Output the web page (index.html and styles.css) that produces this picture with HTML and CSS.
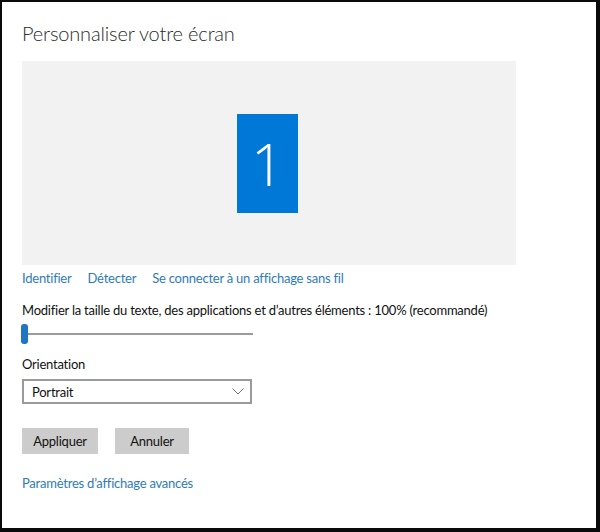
FILE: index.html
```html
<!DOCTYPE html>
<html lang="fr">
<head>
<meta charset="utf-8">
<title>Personnaliser votre écran</title>
<link rel="stylesheet" href="styles.css">
</head>
<body>
<div class="frame">
  <h1 class="title">Personnaliser votre écran</h1>
  <div class="preview">
    <div class="monitor">1</div>
  </div>
  <div class="links">
    <a class="link">Identifier</a>
    <a class="link">Détecter</a>
    <a class="link">Se connecter à un affichage sans fil</a>
  </div>
  <p class="label scale-label">Modifier la taille du texte, des applications et d’autres éléments : 100% (recommandé)</p>
  <div class="slider">
    <div class="track"></div>
    <div class="thumb"></div>
  </div>
  <p class="label orient-label">Orientation</p>
  <div class="select">
    <span class="select-value">Portrait</span>
    <svg class="chevron" width="12" height="7" viewBox="0 0 12 7"><polyline points="0.5,0.5 6,6 11.5,0.5" fill="none" stroke="#777" stroke-width="1"/></svg>
  </div>
  <div class="buttons">
    <button class="btn btn-apply">Appliquer</button>
    <button class="btn btn-cancel">Annuler</button>
  </div>
  <a class="link advanced">Paramètres d’affichage avancés</a>
</div>
</body>
</html>
```
FILE: styles.css
```css
html, body {
  margin: 0;
  padding: 0;
  background: #ffffff;
}
.frame {
  box-sizing: border-box;
  width: 600px;
  height: 532px;
  border-style: solid;
  border-color: #0a0a0a;
  border-width: 2px 4px 4px 2px;
  padding: 17px 0 0 20px;
  font-family: "Lato", "Open Sans", sans-serif;
  font-size: 13px;
  letter-spacing: -0.23px;
  line-height: 20px;
  color: #111;
  display: flex;
  flex-direction: column;
  align-items: flex-start;
}
.title {
  margin: 0;
  font-size: 20px;
  letter-spacing: -0.15px;
  line-height: 28px;
  font-weight: 300;
  color: #2a2a2a;
}
.preview {
  margin-top: 14px;
  width: 494px;
  height: 204px;
  background: #f2f2f2;
  display: flex;
  align-items: center;
  justify-content: center;
}
.monitor {
  width: 61px;
  height: 99px;
  margin-right: 3px;
  background: #0078d7;
  color: #ffffff;
  font-family: "Open Sans", sans-serif;
  font-size: 58px;
  font-weight: 300;
  letter-spacing: 0;
  line-height: 99px;
  text-align: center;
}
.links {
  margin-top: 3px;
  display: flex;
  gap: 16px;
}
.link {
  color: #2f7bb8;
  text-decoration: none;
}
.label {
  margin: 0;
}
.scale-label {
  margin-top: 12px;
}
.slider {
  margin-top: 4px;
  position: relative;
  width: 231px;
  height: 20px;
}
.track {
  position: absolute;
  left: 2px;
  right: 0;
  top: 9px;
  height: 2px;
  background: #9a9a9a;
}
.thumb {
  position: absolute;
  left: -1px;
  top: 0;
  width: 7px;
  height: 20px;
  border-radius: 3px;
  background: #1f74c4;
}
.orient-label {
  margin-top: 10px;
}
.select {
  margin-top: 5px;
  box-sizing: border-box;
  width: 230px;
  height: 25px;
  border: 2px solid #9a9a9a;
  padding: 0 6px 0 8px;
  display: flex;
  align-items: center;
  justify-content: space-between;
}
.chevron {
  display: block;
}
.buttons {
  margin-top: 24px;
  display: flex;
  gap: 17px;
}
.btn {
  height: 26px;
  border: none;
  padding: 0;
  background: #cccccc;
  font-family: inherit;
  font-size: 13px;
  letter-spacing: -0.23px;
  line-height: 20px;
  color: #111;
}
.btn-apply {
  width: 76px;
}
.btn-cancel {
  width: 74px;
}
.advanced {
  margin-top: 19px;
}
```
